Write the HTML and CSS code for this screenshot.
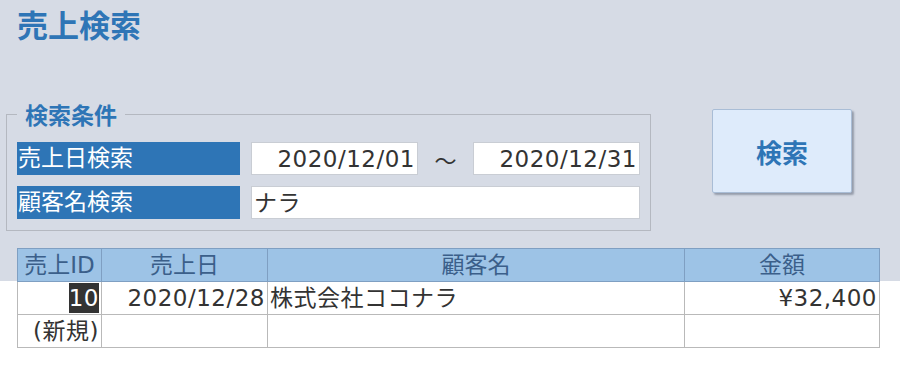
FILE: index.html
```html
<!DOCTYPE html>
<html lang="ja">
<head>
    <meta charset="UTF-8">
    <meta name="viewport" content="width=device-width, initial-scale=1.0">
    <title>売上検索</title>
    <link rel="stylesheet" href="styles.css">
</head>
<body>
    <h1>売上検索</h1>
    <div class="search">
        <fieldset>
            <legend>検索条件</legend>
            <div class="row">
                <div class="label">売上日検索</div>
                <div class="field date">2020/12/01</div>
                <span class="tilde">～</span>
                <div class="field date">2020/12/31</div>
            </div>
            <div class="row">
                <div class="label">顧客名検索</div>
                <div class="field name">ナラ</div>
            </div>
        </fieldset>
        <button class="btn">検索</button>
    </div>
    <table>
        <tr>
            <th class="c-id">売上ID</th>
            <th class="c-date">売上日</th>
            <th class="c-name">顧客名</th>
            <th class="c-amount">金額</th>
        </tr>
        <tr>
            <td class="num"><span class="current">10</span></td>
            <td class="num">2020/12/28</td>
            <td>株式会社ココナラ</td>
            <td class="num">¥32,400</td>
        </tr>
        <tr>
            <td class="num">(新規)</td>
            <td></td>
            <td></td>
            <td></td>
        </tr>
    </table>
</body>
</html>
```

FILE: styles.css
```css
body {
    margin: 0;
    font-family: "DejaVu Sans", "Noto Sans CJK JP", sans-serif;
    color: #333;
    background: linear-gradient(#d6dbe5 281px, #fff 281px);
    min-height: 374px;
}
h1 {
    margin: 0;
    padding: 4px 17px 0;
    font-family: "Noto Sans CJK JP", sans-serif;
    font-size: 31px;
    line-height: 40px;
    font-weight: bold;
    color: #2e75b6;
}
.search {
    display: flex;
    align-items: flex-start;
    margin-top: 58px;
}
fieldset {
    margin: 0 0 0 6px;
    width: 623px;
    padding: 16px 10px 11px 10px;
    border: 1px solid #b4b8c0;
}
legend {
    padding: 0 8px;
    font-family: "Noto Sans CJK JP", sans-serif;
    font-size: 23px;
    line-height: 24px;
    font-weight: bold;
    color: #2e75b6;
}
.row {
    display: flex;
    align-items: center;
    height: 33px;
}
.row + .row {
    margin-top: 11px;
}
.label {
    width: 223px;
    height: 33px;
    line-height: 33px;
    background: #2e75b6;
    color: #fff;
    font-size: 23px;
    padding-left: 1px;
    box-sizing: border-box;
    margin-right: 11px;
}
.field {
    height: 33px;
    line-height: 33px;
    background: #fff;
    border: 1px solid #c9cdd4;
    box-sizing: border-box;
    font-size: 23px;
    letter-spacing: 0.5px;
    padding: 0 2px;
}
.date {
    width: 167px;
    text-align: right;
}
.name {
    width: 389px;
}
.tilde {
    width: 55px;
    text-align: center;
    font-family: "Noto Sans CJK JP", sans-serif;
    font-size: 22px;
}
.btn {
    margin: 7px 0 0 61px;
    width: 140px;
    height: 84px;
    background: #deebfb;
    border: 1px solid #a9bdd6;
    border-radius: 2px;
    box-shadow: 2px 2px 2px rgba(70, 80, 100, 0.45);
    font-family: "Noto Sans CJK JP", sans-serif;
    font-size: 26px;
    font-weight: bold;
    color: #2e75b6;
}
table {
    margin: 17px 0 0 17px;
    border-collapse: collapse;
    width: 862px;
    table-layout: fixed;
    font-size: 23px;
}
th, td {
    box-sizing: border-box;
    height: 33px;
    padding: 0 2px;
    line-height: 32px;
    white-space: nowrap;
}
th {
    background: #9dc3e6;
    border: 1px solid #7f9fc2;
    font-weight: normal;
    color: #3b5f8a;
}
td {
    background: #fff;
    border: 1px solid #b9b9b9;
    letter-spacing: 0.5px;
}
.c-id { width: 84px; }
.c-date { width: 166px; }
.c-name { width: 417px; }
.c-amount { width: 195px; }
.num {
    text-align: right;
}
.current {
    display: inline-block;
    background: #333;
    color: #fff;
    line-height: 30px;
    vertical-align: top;
    margin-top: 1px;
}
```
